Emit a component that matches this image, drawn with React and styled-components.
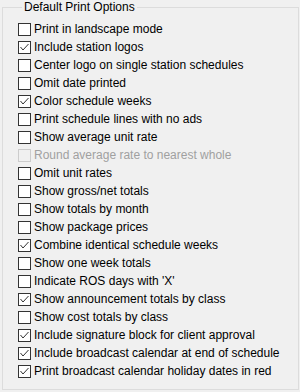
import React from "react";
import styled, { createGlobalStyle } from "styled-components";

const GlobalStyle = createGlobalStyle`
  html, body {
    margin: 0;
    padding: 0;
    background: #f0f0f0;
  }
  #root {
    width: 300px;
    height: 392px;
  }
`;

const Page = styled.div`
  width: 300px;
  height: 392px;
  box-sizing: border-box;
  padding: 0 1px 2px 2px;
  background: #f0f0f0;
  font-family: "Liberation Sans", Arial, sans-serif;
  font-size: 12px;
  color: #000;
`;

const Group = styled.fieldset`
  margin: 0;
  height: 100%;
  box-sizing: border-box;
  border: 1px solid #dcdcdc;
  padding: 5px 0 0 15px;
`;

const Legend = styled.legend`
  margin-left: 4px;
  padding: 0 2px;
  line-height: 15px;
`;

const List = styled.div`
  display: flex;
  flex-direction: column;
`;

const Row = styled.label`
  display: flex;
  align-items: center;
  gap: 3px;
  height: 18px;
  white-space: nowrap;
  color: ${(p) => (p.$disabled ? "#a0a0a0" : "#000")};
`;

const Box = styled.span`
  width: 11px;
  height: 11px;
  flex: 0 0 auto;
  border: 1px solid ${(p) => (p.$disabled ? "#cccccc" : "#333333")};
  display: flex;
  align-items: center;
  justify-content: center;
  background: ${(p) => (p.$disabled ? "#f0f0f0" : "#fff")};
`;

const options = [
  ["Print in landscape mode", false],
  ["Include station logos", true],
  ["Center logo on single station schedules", false],
  ["Omit date printed", false],
  ["Color schedule weeks", true],
  ["Print schedule lines with no ads", false],
  ["Show average unit rate", false],
  ["Round average rate to nearest whole", false, true],
  ["Omit unit rates", false],
  ["Show gross/net totals", false],
  ["Show totals by month", false],
  ["Show package prices", false],
  ["Combine identical schedule weeks", true],
  ["Show one week totals", false],
  ["Indicate ROS days with 'X'", false],
  ["Show announcement totals by class", true],
  ["Show cost totals by class", false],
  ["Include signature block for client approval", true],
  ["Include broadcast calendar at end of schedule", true],
  ["Print broadcast calendar holiday dates in red", true],
];

function Check({ checked, disabled }) {
  return (
    <Box $disabled={disabled}>
      {checked && (
        <svg width="11" height="11" viewBox="0 0 11 11">
          <polyline
            points="1.5,5 4,8 9.5,2"
            fill="none"
            stroke="#333"
            strokeWidth="1"
          />
        </svg>
      )}
    </Box>
  );
}

export default function App() {
  return (
    <Page>
      <GlobalStyle />
      <Group>
        <Legend>Default Print Options</Legend>
        <List>
          {options.map(([label, checked, disabled]) => (
            <Row key={label} $disabled={disabled}>
              <Check checked={checked} disabled={disabled} />
              {label}
            </Row>
          ))}
        </List>
      </Group>
    </Page>
  );
}
